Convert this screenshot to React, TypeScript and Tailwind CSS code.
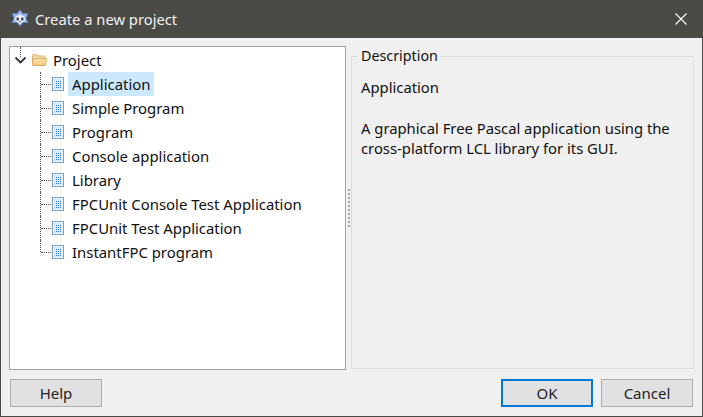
const items = [
  "Application",
  "Simple Program",
  "Program",
  "Console application",
  "Library",
  "FPCUnit Console Test Application",
  "FPCUnit Test Application",
  "InstantFPC program",
];

function AppIcon() {
  return (
    <svg width="20" height="20" viewBox="0 0 20 20">
      <path d="M10 .8l2.900 4 5-.4-2 4.600 2 4.600-5-.4-2.900 4-2.900-4-5 .4 2-4.600-2-4.600 5 .4z" fill="#9dbdf0" stroke="#5b82c4" strokeWidth="0.8" strokeLinejoin="round" />
      <path d="M5.500 7.500l4.500-2 4.500 2 .5 4-5 3.500-5-3.500z" fill="#eef3fc" />
      <path d="M6.500 8.500h2.400v3H6.500zM11.100 8.500h2.400v3h-2.400z" fill="#36425c" />
      <path d="M9 12h2l-1 1.800z" fill="#36425c" />
    </svg>
  );
}

function FolderIcon() {
  return (
    <svg width="15" height="12" viewBox="0 0 15 12">
      <defs>
        <linearGradient id="folderFill" x1="0" y1="0" x2="0" y2="1">
          <stop offset="0" stopColor="#fae3ad" />
          <stop offset="1" stopColor="#f1c87e" />
        </linearGradient>
      </defs>
      <path d="M.5 10V1.500a1 1 0 011-1h3l1 1.500h6.500a1 1 0 011 1V4" fill="#f6dca6" stroke="#dbb06c" />
      <path d="M.5 11.500l1-7h13l-1 7z" fill="url(#folderFill)" stroke="#dbb06c" />
    </svg>
  );
}

function DocIcon() {
  const dots = [];
  for (let y = 0; y < 4; y++) {
    for (let x = 0; x < 3; x++) {
      dots.push(<rect key={`${x}-${y}`} x={4 + x * 2} y={4 + y * 2} width="1" height="1" fill="#2f72d6" />);
    }
  }
  return (
    <svg width="12" height="14" viewBox="0 0 12 14">
      <rect x="0.500" y="0.500" width="11" height="13" fill="#dce9f9" stroke="#7a9fd0" />
      <rect x="1.500" y="1.500" width="9" height="11" fill="none" stroke="#eef4fc" />
      {dots}
    </svg>
  );
}

function TreeRow({ label, selected, last }: { label: string; selected?: boolean; last?: boolean }) {
  return (
    <div className="flex h-6 items-center pl-[30px]">
      <div className="relative h-6 w-3 shrink-0">
        <div className={`absolute left-0 top-0 border-l border-dotted border-[#555] ${last ? "h-3" : "h-6"}`} />
        <div className="absolute left-px top-3 w-[10px] border-t border-dotted border-[#555]" />
      </div>
      <div className="flex w-3 shrink-0">
        <DocIcon />
      </div>
      <div className={`ml-[4px] h-6 px-1 leading-6 ${selected ? "bg-[#cce8ff]" : ""}`}>{label}</div>
    </div>
  );
}

function Button({ label, focused }: { label: string; focused?: boolean }) {
  return (
    <button
      className={`h-7 w-[92px] bg-[#e1e1e1] text-[#222] leading-none ${
        focused ? "border-2 border-[#0078d7]" : "border border-[#adadad]"
      }`}
    >
      {label}
    </button>
  );
}

export default function App() {
  return (
    <div className="flex h-[417px] w-[703px] flex-col overflow-hidden border border-t-0 border-[#4b4a47] bg-[#f0f0f0] font-['Noto_Sans','Open_Sans',sans-serif] text-[15px] text-[#111]">
      <div className="flex h-[38px] shrink-0 items-center bg-[#4b4a47] pl-[9px] pr-[15px] text-[14.750px] text-[#f0f0f0]">
        <AppIcon />
        <span className="ml-[5px] flex-1">Create a new project</span>
        <svg width="12" height="12" viewBox="0 0 12 12" stroke="#fff" strokeWidth="1.100">
          <path d="M.5 .5l11 11M11.500 .5l-11 11" />
        </svg>
      </div>

      <div className="flex pl-[8px] pr-[8px] pt-[8px]">
        <div className="h-[324px] w-[337px] shrink-0 border border-[#a0a0a0] bg-white pt-px text-[14.900px]">
          <div className="flex h-6 items-center pl-[4px]">
            <div className="relative h-6 w-[18px] shrink-0">
              <div className="absolute left-[6px] -top-px h-[10px] border-l border-dotted border-[#555]" />
              <svg className="absolute left-0 top-[8px]" width="13" height="9" viewBox="0 0 13 9" fill="none" stroke="#333" strokeWidth="1.800">
                <path d="M1.500 1.500l5 5 5-5" />
              </svg>
            </div>
            <div className="flex">
              <FolderIcon />
            </div>
            <div className="ml-[6px] leading-6">Project</div>
          </div>
          {items.map((it, i) => (
            <TreeRow key={it} label={it} selected={i === 0} last={i === items.length - 1} />
          ))}
        </div>

        <div className="flex w-[5px] shrink-0 flex-col items-center justify-center gap-[2px]">
          {Array.from({ length: 10 }).map((_, i) => (
            <div key={i} className="h-[2px] w-[2px] bg-[#a8a8a8]" />
          ))}
        </div>

        <fieldset className="h-[323px] flex-1 border border-[#dcdcdc] px-[9px] pb-0 pt-0 text-[14.800px]">
          <legend className="-ml-1 pl-1 pr-0.5 text-[14.300px] leading-5">Description</legend>
          <div className="mt-[9px] leading-6">Application</div>
          <div className="mt-[19px] leading-5">
            A graphical Free Pascal application using the
            <br />
            cross-platform LCL library for its GUI.
          </div>
        </fieldset>
      </div>

      <div className="flex items-center justify-between pl-[9px] pr-[9px] pt-[9px]">
        <Button label="Help" />
        <div className="flex gap-2">
          <Button label="OK" focused />
          <Button label="Cancel" />
        </div>
      </div>
    </div>
  );
}
